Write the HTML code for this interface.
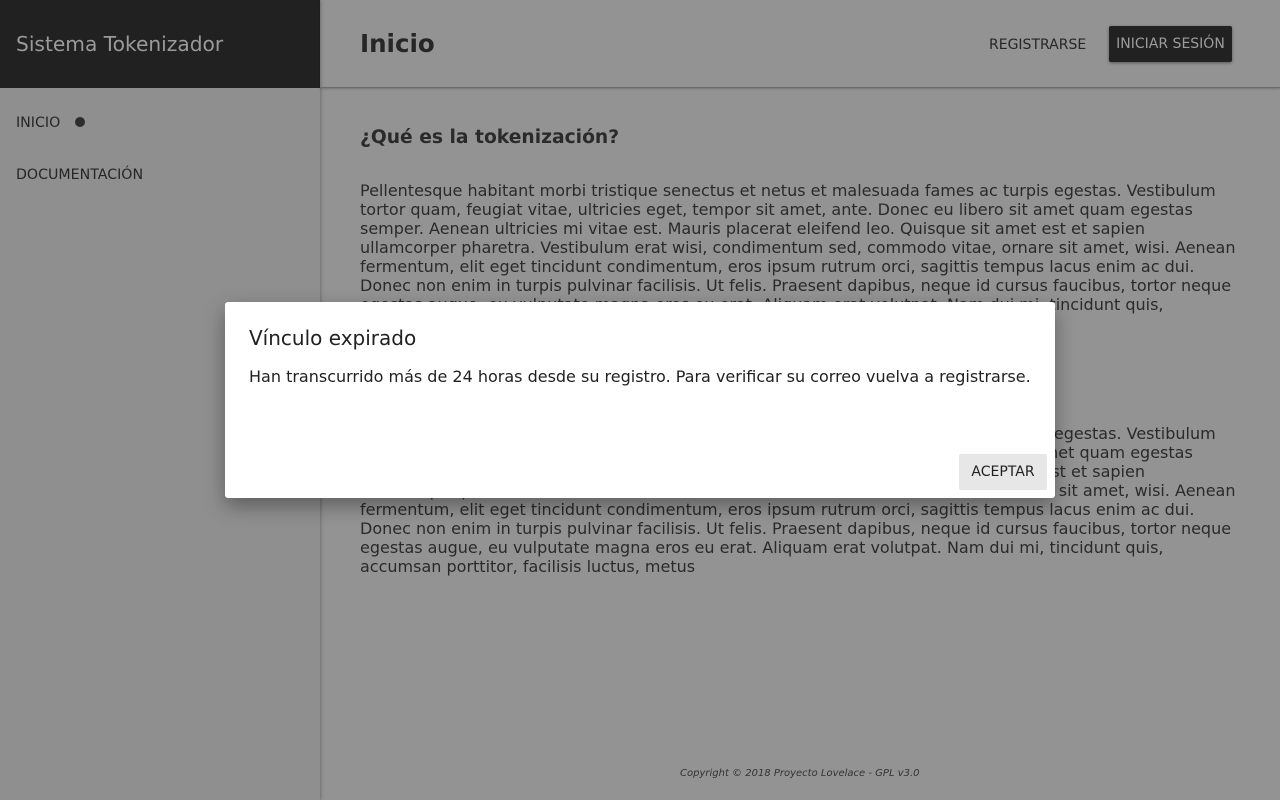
<!DOCTYPE html>
<html><head><meta charset="utf-8"><style>
*{margin:0;padding:0;box-sizing:border-box}
body{width:1280px;height:800px;overflow:hidden;position:relative;background:#939393;font-family:"DejaVu Sans","Liberation Sans",sans-serif;color:#222}
.side{position:absolute;left:0;top:0;width:320px;height:800px;background:#8f8f8f;box-shadow:1px 0 3px rgba(0,0,0,.25)}
.brand{height:88px;background:#212121;color:#9a9a9a;font-size:20.2px;line-height:88px;padding-left:16px}
.nav{font-size:14.2px;color:#262626;position:absolute;left:16px}
.dot{display:inline-block;width:10px;height:10px;border-radius:50%;background:#2c2c2c;margin-left:15px;vertical-align:0}
.top{position:absolute;left:320px;top:0;right:0;height:88px;border-bottom:1px solid #6a6a6a;box-shadow:0 1px 2px rgba(0,0,0,.2)}
.top h1{position:absolute;left:40px;top:29px;font-size:24.5px;font-weight:bold;color:#262626}
.reg{position:absolute;left:669px;top:37px;font-size:14px;color:#262626}
.ini{position:absolute;left:789px;top:26px;width:123px;height:36px;background:#212121;color:#9c9c9c;font-size:14px;line-height:36px;text-align:center;border-radius:2px;box-shadow:0 1px 3px rgba(0,0,0,.4)}
.main{position:absolute;left:360px;color:#2a2a2a}
h2{font-size:18.7px;font-weight:bold}
p{font-size:16px;line-height:19px;white-space:nowrap;letter-spacing:0}
.foot{position:absolute;left:680px;top:768px;font-size:10px;font-style:italic;color:#333}
.modal{position:absolute;left:225px;top:302px;width:830px;height:196px;background:#fff;border-radius:3px;box-shadow:0 8px 20px rgba(0,0,0,.35)}
.mt{position:absolute;left:24px;top:24px;font-size:20px;color:#212121}
.mb{position:absolute;left:24px;top:65px;font-size:16px;color:#212121;white-space:nowrap}
.ok{position:absolute;left:734px;top:152px;width:88px;height:36px;background:#e7e7e7;border-radius:2px;font-size:14px;line-height:36px;text-align:center;color:#212121}
</style></head><body>
<div class="side"><div class="brand">Sistema Tokenizador</div>
<div class="nav" style="top:115px">INICIO<span class="dot"></span></div>
<div class="nav" style="top:167px">DOCUMENTACIÓN</div></div>
<div class="top"><h1>Inicio</h1><div class="reg">REGISTRARSE</div><div class="ini">INICIAR SESIÓN</div></div>
<div class="main" style="top:127px"><h2>¿Qué es la tokenización?</h2></div>
<div class="main" style="top:181px"><p>Pellentesque habitant morbi tristique senectus et netus et malesuada fames ac turpis egestas. Vestibulum<br>tortor quam, feugiat vitae, ultricies eget, tempor sit amet, ante. Donec eu libero sit amet quam egestas<br>semper. Aenean ultricies mi vitae est. Mauris placerat eleifend leo. Quisque sit amet est et sapien<br>ullamcorper pharetra. Vestibulum erat wisi, condimentum sed, commodo vitae, ornare sit amet, wisi. Aenean<br>fermentum, elit eget tincidunt condimentum, eros ipsum rutrum orci, sagittis tempus lacus enim ac dui.<br>Donec non enim in turpis pulvinar facilisis. Ut felis. Praesent dapibus, neque id cursus faucibus, tortor neque<br>egestas augue, eu vulputate magna eros eu erat. Aliquam erat volutpat. Nam dui mi, tincidunt quis,<br>accumsan porttitor, facilisis luctus, metus</p></div>
<div class="main" style="top:370px"><h2>¿Qué es la tokenización?</h2></div>
<div class="main" style="top:424px"><p>Pellentesque habitant morbi tristique senectus et netus et malesuada fames ac turpis egestas. Vestibulum<br>tortor quam, feugiat vitae, ultricies eget, tempor sit amet, ante. Donec eu libero sit amet quam egestas<br>semper. Aenean ultricies mi vitae est. Mauris placerat eleifend leo. Quisque sit amet est et sapien<br>ullamcorper pharetra. Vestibulum erat wisi, condimentum sed, commodo vitae, ornare sit amet, wisi. Aenean<br>fermentum, elit eget tincidunt condimentum, eros ipsum rutrum orci, sagittis tempus lacus enim ac dui.<br>Donec non enim in turpis pulvinar facilisis. Ut felis. Praesent dapibus, neque id cursus faucibus, tortor neque<br>egestas augue, eu vulputate magna eros eu erat. Aliquam erat volutpat. Nam dui mi, tincidunt quis,<br>accumsan porttitor, facilisis luctus, metus</p></div>
<div class="foot">Copyright © 2018 Proyecto Lovelace - GPL v3.0</div>
<div class="modal"><div class="mt">Vínculo expirado</div>
<div class="mb">Han transcurrido más de 24 horas desde su registro. Para verificar su correo vuelva a registrarse.</div>
<div class="ok">ACEPTAR</div></div>
</body></html>
